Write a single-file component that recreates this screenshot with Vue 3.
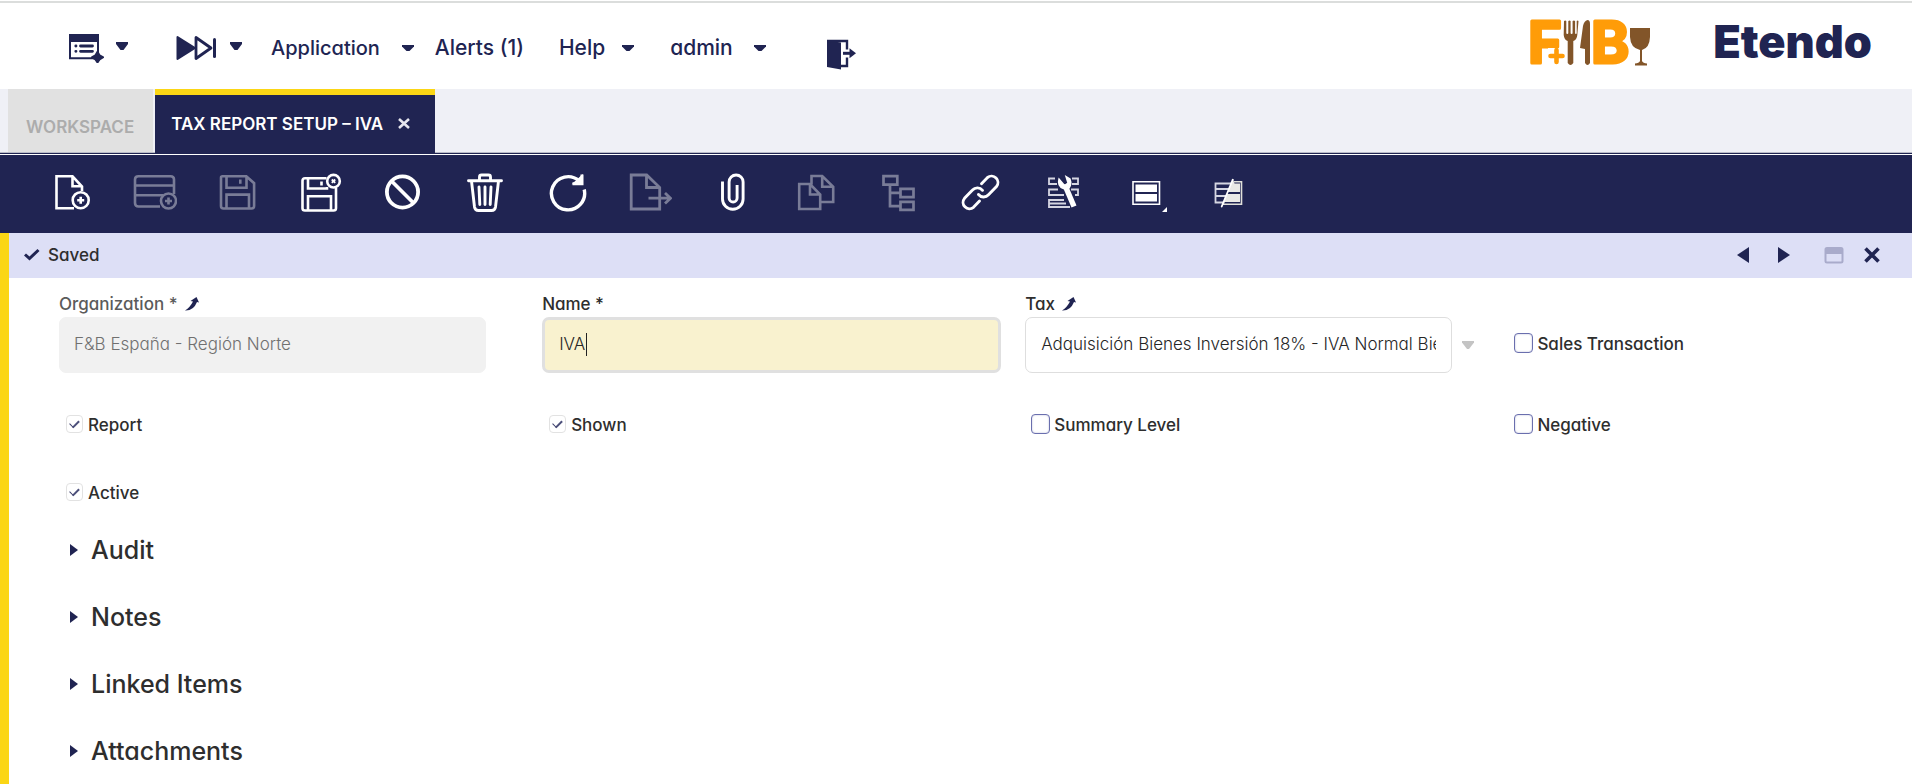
<script setup>
import { ref } from 'vue'

const name = ref('IVA')
const tax = ref('adq18')
const checks = ref({
  sales: false,
  report: true,
  shown: true,
  summary: false,
  negative: false,
  active: true,
})

const checkFields = [
  { key: 'report', label: 'Report' },
  { key: 'shown', label: 'Shown' },
  { key: 'summary', label: 'Summary Level' },
  { key: 'negative', label: 'Negative' },
  { key: 'active', label: 'Active' },
]

const sections = ['Audit', 'Notes', 'Linked Items', 'Attachments']
</script>

<template>
  <div class="app">
    <header class="header">
      <nav class="nav" aria-label="Main">
        <button class="nav-item quick-create" type="button" aria-label="Quick create">
          <svg width="36" height="30" viewBox="0 0 36 30">
            <path d="M1 1h30v8H1z" fill="currentColor" />
            <path d="M26 25.200H2V2h28v18" fill="none" stroke="currentColor" stroke-width="2" />
            <g fill="none" stroke="currentColor" stroke-width="2.800" stroke-linecap="round">
              <path d="M7.800 13h.2M12.500 13h12M7.800 18.300h.2M12.500 18.300h12" />
            </g>
            <path d="M29.500 18.500l2.200 3.600 3.600 2.200-3.600 2.200-2.200 3.300-2.200-3.300-3.600-2.200 3.600-2.200z" fill="currentColor" stroke="currentColor" stroke-width="1.600" stroke-linejoin="round" />
          </svg>
          <svg class="caret" width="14" height="10" viewBox="0 0 14 10"><path d="M1 1h12v2L8.500 9h-3L1 3z" fill="currentColor" /></svg>
        </button>
        <button class="nav-item quick-launch" type="button" aria-label="Quick launch">
          <svg width="42" height="26" viewBox="0 0 42 26">
            <path d="M1.500 2v22L19 13z" fill="currentColor" stroke="currentColor" stroke-width="2" stroke-linejoin="round" />
            <path d="M20 2.500v21L35 13z" fill="none" stroke="currentColor" stroke-width="2.800" stroke-linejoin="round" />
            <path d="M38.500 4.500v17" stroke="currentColor" stroke-width="3" stroke-linecap="round" />
          </svg>
          <svg class="caret" width="14" height="10" viewBox="0 0 14 10"><path d="M1 1h12v2L8.500 9h-3L1 3z" fill="currentColor" /></svg>
        </button>
        <button class="nav-item application" type="button">
          Application
          <svg class="caret-flat" width="14" height="8" viewBox="0 0 14 8"><path d="M1 1h12v1.500L8.500 7h-3L1 2.500z" fill="currentColor" /></svg>
        </button>
        <button class="nav-item alerts" type="button">Alerts (1)</button>
        <button class="nav-item help" type="button">
          Help
          <svg class="caret-flat" width="14" height="8" viewBox="0 0 14 8"><path d="M1 1h12v1.500L8.500 7h-3L1 2.500z" fill="currentColor" /></svg>
        </button>
        <button class="nav-item user" type="button">
          admin
          <svg class="caret-flat" width="14" height="8" viewBox="0 0 14 8"><path d="M1 1h12v1.500L8.500 7h-3L1 2.500z" fill="currentColor" /></svg>
        </button>
        <button class="nav-item logout" type="button" aria-label="Log out">
          <svg width="32" height="32" viewBox="0 0 32 32">
            <path d="M2 1.500l14 2v27L2 28z" fill="currentColor" />
            <path d="M2 2h20v8.500M22 18.500V27h-7" fill="none" stroke="currentColor" stroke-width="2.400" />
            <path d="M18 14.300h8" stroke="currentColor" stroke-width="3" />
            <path d="M24.500 9.300l6.500 5-6.500 5z" fill="currentColor" />
          </svg>
        </button>
      </nav>
      <div class="logos">
        <svg class="client-logo" width="132" height="80" viewBox="-12 -17 132 80" role="img" aria-label="F+B">
          <g class="client-letters">
            <text x="-3" y="44">F</text>
            <text x="60" y="44">B</text>
          </g>
          <path d="M17 29h16v17H17z" fill="#fff" />
          <path d="M25.500 31v12M19.500 37h12" stroke="#ff9c08" stroke-width="4.600" stroke-linecap="round" />
          <g fill="#825529">
            <path d="M33 2q1.300-1 2.300 0V14q0 1 1 1t1-1V2q1.300-1 2.300 0V14q0 1 1 1t1-1V2q1.300-1 2.500 0V14q0 1 .8 1t.8-1V2q1-1 1.800 0L46.300 16q-.5 5-4 6V44q-2.800 4-5.600 0V22q-3.500-1-4-6z" />
            <path d="M52 7q1-5 4.500-6 2.500 0 2.500 4v39q-2.500 4-5 0V30l-5-1z" />
            <path d="M99 9h20v9q-.5 11-8 13v11q1 2 5 2.500v2h-12v-2q4-.5 5-2.500V31q-9.500-2-10-13z" />
          </g>
        </svg>
        <span class="brand">Etendo</span>
      </div>
    </header>

    <div class="tabs" role="tablist">
      <button class="tab" type="button" role="tab" aria-selected="false">WORKSPACE</button>
      <div class="tab tab-active">
        <button class="tab-title" type="button" role="tab" aria-selected="true">TAX REPORT SETUP – IVA</button>
        <button class="tab-close" type="button" aria-label="Close tab">
          <svg width="12" height="12" viewBox="0 0 12 12"><path d="M1 1l10 9M11 1L1 10" stroke="#e6e6ee" stroke-width="2.600" /></svg>
        </button>
      </div>
    </div>

    <div class="toolbar" role="toolbar">
      <div class="tools">
        <button class="tool" type="button" aria-label="New">
          <svg viewBox="0 0 44 40">
            <path d="M24 36.300H6.500V4.300h16L32 14.500V19M22.500 4.500v9.800H32" />
            <circle cx="30.700" cy="28.200" r="8" />
            <path d="M30.700 24.700v7M27.200 28.200h7" />
          </svg>
        </button>
        <button class="tool" type="button" disabled aria-label="New in grid">
          <svg viewBox="0 0 44 40">
            <path d="M27 34.500H5.500q-3.500 0-3.500-3.500V7.500Q2 4.200 5.500 4.200h32q3.500 0 3.500 3.300V22M2 13.500h39M2 23.300h28" />
            <circle cx="35.500" cy="29" r="7.500" />
            <path d="M35.500 25.500v7M32 29h7" />
          </svg>
        </button>
        <button class="tool" type="button" disabled aria-label="Save">
          <svg viewBox="0 0 44 40">
            <path d="M7.500 4.200h23.800l7.800 7V34q0 2.500-2.500 2.500H8.500Q6 36.500 6 34V5.700q0-1.500 1.500-1.500zM11.500 4.200v11.600h20V4.200M11.500 36.500V22.600H34v13.900M25.300 7.500v4.300" />
          </svg>
        </button>
        <button class="tool" type="button" aria-label="Save and close">
          <svg viewBox="0 0 44 40">
            <path d="M28.500 6.200H7q-2.500 0-2.500 2.500v27.500q0 2.300 2.500 2.300h28.500q2.500 0 2.500-2.300V16M10 6.200v10.300h19V15M10 38.500V24.200h23v14.300M23.500 9.500v4" />
            <circle cx="35.500" cy="9.200" r="6.300" />
            <path d="M33.800 7.500l3.400 3.400M37.200 7.500l-3.400 3.400" stroke-width="1.800" />
          </svg>
        </button>
        <button class="tool" type="button" aria-label="Cancel">
          <svg viewBox="0 0 44 40">
            <g stroke-width="3.800"><circle cx="22.500" cy="20" r="15.600" /><path d="M11.500 9l22 22" /></g>
          </svg>
        </button>
        <button class="tool" type="button" aria-label="Delete">
          <svg viewBox="0 0 44 40">
            <path d="M5.500 8.800h33M16.500 8.500V5q0-2 2-2h7q2 0 2 2v3.500M8.500 9l3 26q.5 3.500 4 3.500h13q3.500 0 4-3.500l3-26M16 15l.8 17.500M22 15v17.500M28 15l-.8 17.500" stroke-width="2.900" stroke-linecap="round" />
          </svg>
        </button>
        <button class="tool" type="button" aria-label="Refresh">
          <svg viewBox="0 0 44 40">
            <path d="M39.200 17.500A16.600 16.600 0 1 1 34 8.800" stroke-width="3.400" />
            <path d="M37 2.500v9.300h-9.500" stroke-width="3" />
            <path d="M30 11l6.500-6v6z" fill="#fff" />
          </svg>
        </button>
        <button class="tool" type="button" disabled aria-label="Export">
          <svg viewBox="0 0 44 40">
            <path d="M18.700 3H3.200v34h28.500V15.500zM18.500 3v12.500h13M20.500 26.200h22M37 21l5.500 5.200L37 31.500" stroke-width="2.800" />
          </svg>
        </button>
        <button class="tool" type="button" aria-label="Attachments">
          <svg viewBox="0 0 44 40">
            <path d="M11.500 9.500V27a10.300 10.300 0 0 0 20.600 0V10a7 7 0 0 0-14 0v16a4 4 0 0 0 8 0V13" stroke-width="2.900" />
          </svg>
        </button>
        <button class="tool" type="button" disabled aria-label="Copy">
          <svg viewBox="0 0 44 40">
            <path d="M17 12H6.200v25h21V22.500zM17 12v10.500h10M18.500 12.500V4h10.700l11 10.800V30H28M29.200 4v10.800h11" stroke-width="2.600" />
          </svg>
        </button>
        <button class="tool" type="button" disabled aria-label="Tree">
          <svg viewBox="0 0 44 40">
            <path d="M7.500 4.200h13.800v8.500H7.500zM24.500 16.800h13v8.400h-13zM24.500 29.800h13v8h-13zM14 12.700v21.500h10.500M14 20.800h10.500" stroke-width="2.700" />
          </svg>
        </button>
        <button class="tool" type="button" aria-label="Linked items">
          <svg viewBox="0 0 44 40">
            <path d="M23.500 11.800L29.500 5.500a6.400 6.400 0 0 1 9 9L30.500 22.800a6.600 6.600 0 0 1-10-.3M21.500 29L15.500 35.300a6.400 6.400 0 0 1-9-9L14.500 18a6.600 6.600 0 0 1 10 .3" stroke-width="2.900" stroke-linecap="round" />
          </svg>
        </button>
        <button class="tool" type="button" aria-label="Process">
          <svg viewBox="0 0 44 40">
            <g stroke="#d5d6e2" stroke-width="1.800">
              <path d="M14 6.500H8v5.500h8M31 6.500h6V12h-6M17 17.500H8V23h15M30 17.500h7V23h-3M23 28H8v7h21M8 31.500h17" />
            </g>
            <path d="M24.500 14.500l8.500 20" stroke-width="5.400" />
            <path d="M18 7q-2 7.500 4.500 9.500l5.500-.5q3-3.500 1-9L25 4.500l2 6.500-3.500 2.500z" fill="#fff" stroke-width="1.400" />
          </svg>
        </button>
        <button class="tool" type="button" aria-label="View">
          <svg viewBox="0 0 44 40">
            <path d="M10 9.700h26.500v22.500H10z" stroke-width="1.600" />
            <path d="M12.500 12.500h21.500V20H12.500zM12.500 22H34v7.500H12.500z" fill="#fff" stroke="none" />
            <path d="M44 35v5h-5z" fill="#fff" stroke="none" />
          </svg>
        </button>
        <button class="tool" type="button" aria-label="Edit in grid">
          <svg viewBox="0 0 44 40">
            <path d="M25 11.500H9.500v19h9M9.500 17h14M9.500 24h11" stroke="#d5d6e2" stroke-width="1.800" />
            <path d="M28 9.700h7.500v22.500H17" stroke="#e0e0da" stroke-width="1.600" />
            <path d="M27 7l1.500 4.500H34V20H22zM21 22h13v8H17.500L15.500 36l-.5-1z" fill="#e9e9e6" stroke="none" />
            <path d="M27 7L15.500 35" stroke-width="1.800" />
          </svg>
        </button>
      </div>
    </div>

    <main class="record">
      <div class="status">
        <svg width="18" height="14" viewBox="0 0 18 14"><path d="M2 6.500l4.500 4L15.500 2" fill="none" stroke="#202452" stroke-width="3" /></svg>
        <span class="status-text">Saved</span>
        <div class="status-actions">
          <button type="button" aria-label="Previous record"><svg width="14" height="18" viewBox="0 0 14 18"><path d="M13 1v16L1 9z" fill="#202452" /></svg></button>
          <button type="button" aria-label="Next record"><svg width="14" height="18" viewBox="0 0 14 18"><path d="M1 1v16L13 9z" fill="#202452" /></svg></button>
          <button type="button" class="maximize" disabled aria-label="Maximize"><svg width="20" height="18" viewBox="0 0 20 18"><rect x="1.500" y="2" width="17" height="14.500" rx="1.500" fill="none" stroke="#a9abcb" stroke-width="2" /><path d="M2 2h16v6H2z" fill="#a9abcb" /></svg></button>
          <button type="button" aria-label="Close record"><svg width="18" height="18" viewBox="0 0 18 18"><path d="M2.500 2.500l13 13M15.500 2.500l-13 13" stroke="#202452" stroke-width="3.600" /></svg></button>
        </div>
      </div>

      <form class="form" @submit.prevent>
        <div class="field">
          <div class="label-row muted">
            <label for="organization">Organization *</label>
            <a href="#" aria-label="Open organization"><svg width="14" height="16" viewBox="0 0 14 16"><path d="M0 14.500Q5 11.500 8 5.500L5.500 5 11.500 1 14 6.500l-2-.5Q8.500 15 0 14.500z" fill="#202452" /></svg></a>
          </div>
          <div class="control">
            <input id="organization" class="box" type="text" value="F&B España - Región Norte" disabled />
          </div>
        </div>

        <div class="field">
          <div class="label-row"><label for="name">Name *</label></div>
          <div class="control wide">
            <input id="name" v-model="name" class="box focused" type="text" />
            <span class="text-cursor" />
          </div>
        </div>

        <div class="field">
          <div class="label-row">
            <label for="tax">Tax</label>
            <a href="#" aria-label="Open tax"><svg width="14" height="16" viewBox="0 0 14 16"><path d="M0 14.500Q5 11.500 8 5.500L5.500 5 11.500 1 14 6.500l-2-.5Q8.500 15 0 14.500z" fill="#202452" /></svg></a>
          </div>
          <div class="control">
            <select id="tax" v-model="tax" class="box">
              <option value="adq18">Adquisición Bienes Inversión 18% - IVA Normal Bienes Inversión</option>
            </select>
            <svg class="picker" width="14" height="10" viewBox="0 0 14 10"><path d="M1 1h12v1.500L8 9H6L1 2.500z" fill="#c4c4c4" /></svg>
          </div>
        </div>

        <div class="field">
          <label class="check check-inline">
            <input v-model="checks.sales" type="checkbox" />
            <span>Sales Transaction</span>
          </label>
        </div>

        <div v-for="f in checkFields" :key="f.key" class="field check-row">
          <label class="check">
            <input v-model="checks[f.key]" type="checkbox" />
            <span>{{ f.label }}</span>
          </label>
        </div>
      </form>

      <div class="sections">
        <button v-for="s in sections" :key="s" class="section" type="button" aria-expanded="false">
          <svg width="10" height="14" viewBox="0 0 10 14"><path d="M1 1v12l8-6z" fill="#202452" /></svg>
          {{ s }}
        </button>
      </div>
    </main>
  </div>
</template>

<style>
body {
  background: #fff;
}
</style>

<style scoped>
.app {
  min-height: 100vh;
  display: flex;
  flex-direction: column;
  font-family: Inter, "Open Sans", sans-serif;
  font-feature-settings: "cv11";
  font-size: 17px;
  line-height: 20px;
  color: #2e2e2e;
}
.app * {
  box-sizing: border-box;
}
.app svg {
  display: block;
  flex: none;
}
button {
  margin: 0;
  padding: 0;
  border: 0;
  background: none;
  color: inherit;
  font: inherit;
  font-feature-settings: inherit;
}

/* header */
.header {
  display: flex;
  align-items: center;
  justify-content: space-between;
  height: 88px;
  margin-top: 1px;
  border-top: 2px solid #dbdddc;
  padding: 0 40px 0 68px;
}
.nav {
  display: flex;
  align-items: center;
  padding-top: 4px;
}
.nav-item {
  display: flex;
  align-items: center;
  color: #202452;
  font-size: 21px;
  font-weight: 500;
  line-height: 30px;
  white-space: nowrap;
}
.quick-create {
  gap: 11px;
  margin-right: 47px;
}
.quick-launch {
  gap: 11px;
  margin-right: 28px;
}
.caret {
  margin-bottom: 4px;
}
.application {
  gap: 21px;
  margin-right: 20px;
  font-size: 20px;
}
.alerts {
  margin-right: 35px;
}
.help {
  gap: 16px;
  margin-right: 35px;
}
.user {
  gap: 20px;
  margin-right: 58px;
}
.logout {
  padding-top: 14px;
}
.logos {
  display: flex;
  align-items: center;
  gap: 62px;
  padding-bottom: 8px;
}
.client-letters {
  fill: #ff9c08;
  stroke: #ff9c08;
  stroke-width: 3px;
  stroke-linejoin: round;
  font-size: 58px;
  font-weight: 700;
}
.brand {
  color: #202452;
  font-size: 45px;
  font-weight: 900;
  line-height: 46px;
}

/* tabs */
.tabs {
  display: flex;
  gap: 2px;
  height: 64px;
  padding-left: 8px;
  background: #eff0f6;
  border-bottom: 1px solid #b9bbc6;
}
.tab {
  display: flex;
  align-items: center;
  height: 63px;
  padding: 12px 19px 0 18px;
  background: #e1e1e1;
  color: #acacac;
  font-weight: 600;
  line-height: 24px;
}
.tab-active {
  gap: 15px;
  height: 64px;
  padding: 0 25px 0 16px;
  border-top: 6px solid #fbd615;
  background: #202452;
  color: #fff;
}

/* toolbar */
.toolbar {
  padding: 17px 31px 21px;
  background: #202452;
  border-top: 1px solid #202452;
  box-shadow: inset 0 1px #fff;
}
.tools {
  display: grid;
  grid-template-columns: repeat(15, 1fr);
  max-width: 1238px;
}
.tool {
  display: flex;
  justify-content: center;
  padding-top: 1px;
}
.tool svg {
  width: 44px;
  height: 40px;
  fill: none;
  stroke: #fff;
  stroke-width: 2.6;
}
.tool:disabled svg {
  opacity: 0.4;
}

/* record */
.record {
  flex: 1;
  border-left: 9px solid #fbd615;
}
.status {
  display: flex;
  align-items: center;
  height: 45px;
  padding: 0 31px 2px 14px;
  background: #dddff6;
}
.status-text {
  margin-left: 7px;
  font-weight: 500;
}
.status-actions {
  display: flex;
  align-items: center;
  gap: 27px;
  margin-left: auto;
}
.maximize {
  margin: 0 -8px 0 6px;
}

.form {
  display: grid;
  grid-template-columns: 6fr 6fr 6fr 5fr;
  column-gap: 24px;
  padding: 14px 21px 0 50px;
}
.field {
  min-width: 0;
}
.label-row {
  display: flex;
  align-items: center;
  gap: 7px;
  height: 25px;
  padding-bottom: 1px;
  font-weight: 500;
}
.muted {
  color: #5b5b5b;
}
.control {
  position: relative;
  display: flex;
  align-items: center;
  padding-right: 32px;
}
.wide {
  padding-right: 0;
}
.box {
  width: 100%;
  height: 56px;
  margin: 0;
  padding: 0 15px 2px;
  border: 1px solid #dedede;
  border-radius: 7px;
  outline: 0;
  background: #fff;
  color: #262626;
  font: 300 17px/24px Inter, "Open Sans", sans-serif;
  font-feature-settings: "cv11";
  appearance: none;
  opacity: 1;
}
.box:disabled {
  padding: 0 14px 2px;
  border-color: #f1f1f1;
  background: #f1f1f1;
  color: #707070;
}
.focused {
  padding: 0 14px 2px;
  border: 3px solid #e0e0e0;
  background: #f9f2cf;
}
.text-cursor {
  position: absolute;
  left: 44px;
  top: 16px;
  width: 1px;
  height: 23px;
  background: #222;
}
.picker {
  position: absolute;
  right: 9px;
}
.check {
  display: flex;
  align-items: center;
  gap: 4px;
  height: 24px;
  padding-left: 6px;
  font-weight: 500;
}
.check span {
  padding-top: 2px;
}
.check-inline {
  margin-top: 39px;
}
.check-row {
  height: 68px;
  padding-top: 39px;
}
.check input {
  appearance: none;
  width: 19px;
  height: 20px;
  margin: 0;
  border: 1px solid #6a6fae;
  border-radius: 4px;
  background: #fff;
  box-shadow: inset 0 0 2px #b5b7d6;
}
.check input:checked {
  width: 17px;
  height: 18px;
  margin: 0 1px;
  border: 1px solid #e2e2e2;
  box-shadow: none;
  display: grid;
  place-items: center;
}
.check input:checked::before {
  content: "";
  width: 8px;
  height: 4px;
  margin-bottom: 2px;
  border-left: 1px solid #3c3f6c;
  border-bottom: 2px solid #4c4f7a;
  transform: rotate(-45deg);
}

.sections {
  display: flex;
  flex-direction: column;
  align-items: flex-start;
  padding: 7px 0 0 60px;
}
.section {
  display: flex;
  align-items: center;
  gap: 12px;
  height: 67px;
  font-size: 25px;
  font-weight: 500;
}
</style>
